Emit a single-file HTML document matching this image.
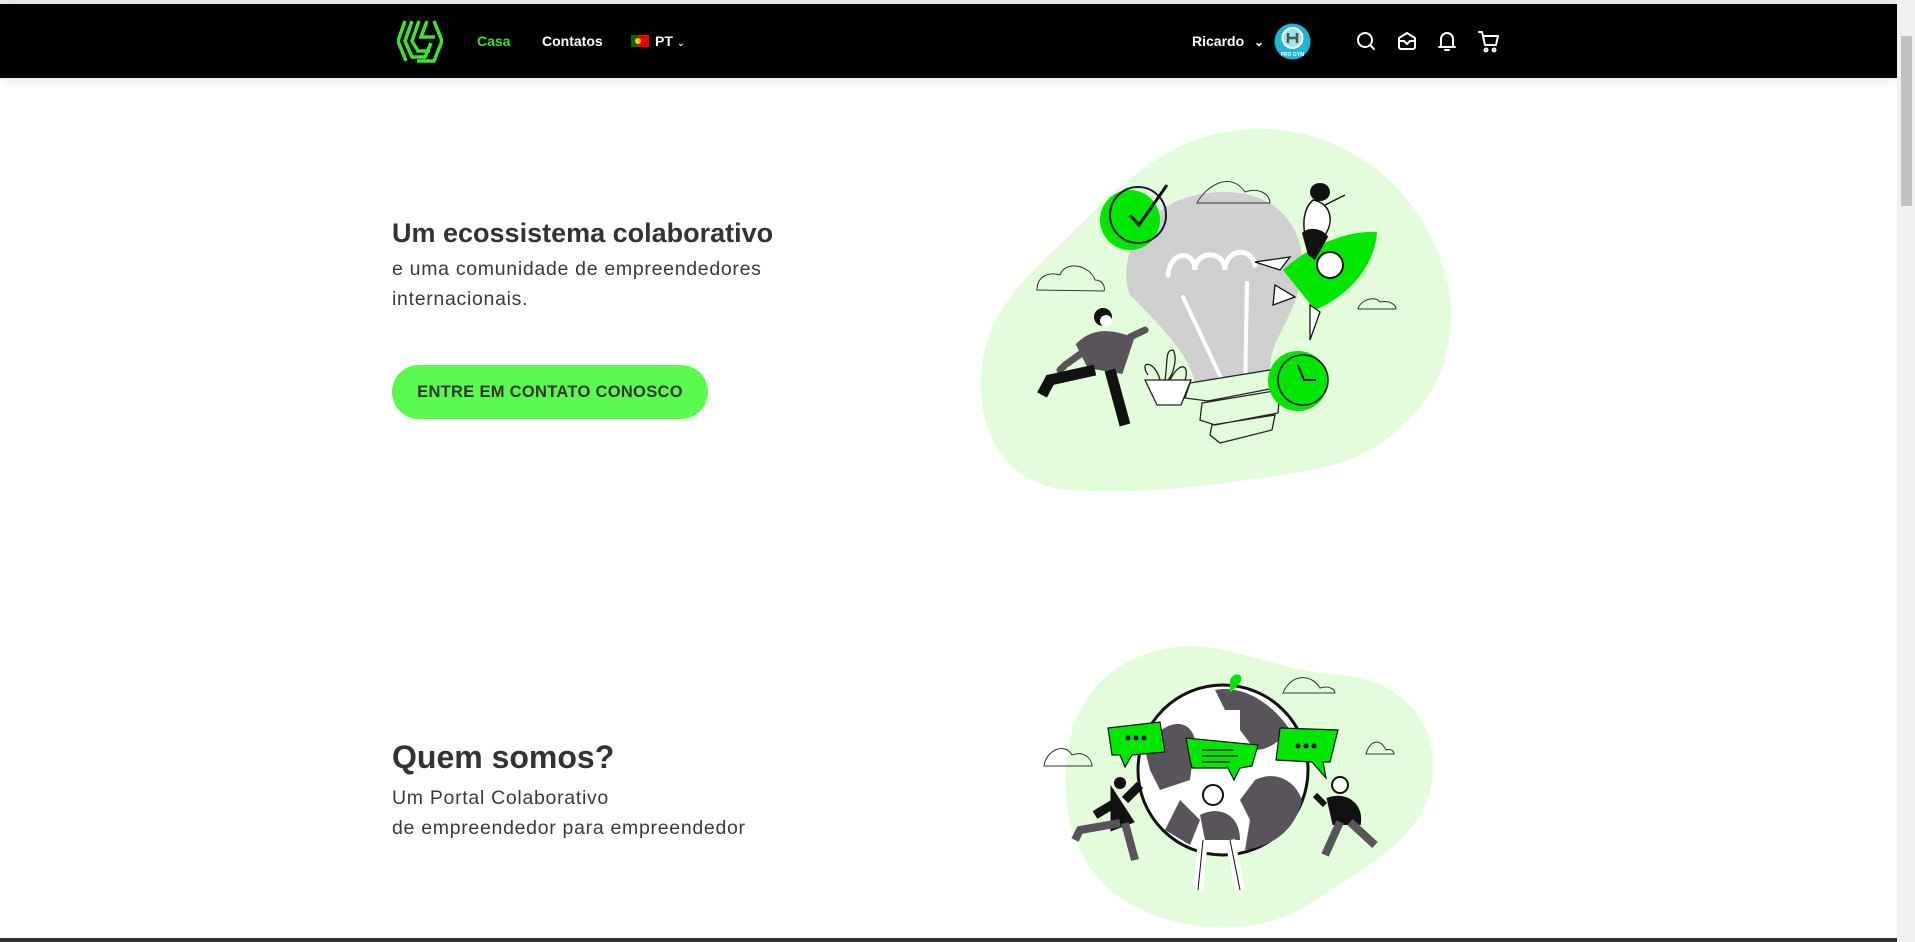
<!DOCTYPE html>
<html><head><meta charset="utf-8"><style>
*{margin:0;padding:0;box-sizing:border-box}
body{width:1915px;height:942px;overflow:hidden;background:#fff;font-family:"Liberation Sans",sans-serif;position:relative}
.top{position:absolute;left:0;top:0;width:1915px;height:4px;background:#e8e8e8}
nav{position:absolute;left:0;top:4px;width:1897px;height:74px;background:#000;box-shadow:0 4px 10px rgba(0,0,0,.08)}
.t{position:absolute;color:#fff;font-size:14px;font-weight:bold}
.sb{position:absolute;right:0;top:0;width:18px;height:942px;background:#f1f1f1}
.sb i{position:absolute;left:4px;top:36px;width:11px;height:170px;background:#c1c1c1}
h2{position:absolute;left:392px;color:#333;font-weight:bold}
p.s{position:absolute;left:392px;color:#3a3a3a;font-size:19.5px;line-height:30px;letter-spacing:.7px}
.btn{position:absolute;left:392px;top:365px;width:316px;height:54px;border-radius:27px;background:#5bfa4e;color:#333;font-weight:bold;font-size:16.5px;text-align:center;line-height:54px;letter-spacing:.3px}
.bot{position:absolute;left:0;top:938px;width:1897px;height:4px;background:#333}
</style></head><body>
<div class="top"></div>
<nav>
<svg style="position:absolute;left:397px;top:15px" width="46" height="44" viewBox="0 0 46 44"><g fill="none" stroke="#3fe32a" stroke-width="3.5"><path d="M8 2 L1 22 L9 42"/><path d="M15 2 L8 22 L15 38 L28 38 L34 24"/><path d="M22 2 L15 22 L21 32 L33 32"/><path d="M30 2 L24 18 L38 18"/><path d="M37 2 L45 22 L37 42 L20 42"/></g></svg>
<div class="t" style="left:477px;top:29px;color:#3fe32a">Casa</div>
<div class="t" style="left:542px;top:29px">Contatos</div>
<svg style="position:absolute;left:631px;top:31px" width="18" height="12"><rect width="7" height="12" fill="#006600"/><rect x="7" width="11" height="12" fill="#e00"/><circle cx="7" cy="6" r="3" fill="#fc0"/></svg>
<div class="t" style="left:655px;top:29px">PT <span style="font-size:10px;font-weight:normal">&#8964;</span></div>
<div class="t" style="left:1192px;top:29px">Ricardo <span style="font-size:12px;margin-left:6px">&#8964;</span></div>
<svg style="position:absolute;left:1274px;top:19px" width="37" height="37" viewBox="0 0 37 37"><circle cx="18.5" cy="18.5" r="18" fill="#1fb7d6"/><circle cx="18.5" cy="15" r="10" fill="#9fe3ef" stroke="#fff" stroke-width="2"/><path d="M14 10v10M23 10v10M14 15h9" stroke="#555" stroke-width="2.5"/><text x="18.5" y="33" font-size="5" fill="#fff" text-anchor="middle" font-family="Liberation Sans" font-weight="bold">PRO GYM</text></svg>
<svg style="position:absolute;left:1355px;top:26px" width="150" height="24" viewBox="0 0 150 24" fill="none" stroke="#fff" stroke-width="2" stroke-linecap="round" stroke-linejoin="round">
<circle cx="10" cy="10" r="7"/><path d="M15 15l4 4"/>
<path d="M44 8l8-5 8 5v9a2 2 0 0 1-2 2H46a2 2 0 0 1-2-2z"/><path d="M44 11h5l3 3 3-3h5"/>
<path d="M86 17V9a6 6 0 0 1 12 0v8zM84 17h16M90 20h4"/>
<path d="M124 2h3l3 13h11l2-9h-15"/><circle cx="131" cy="20" r="1.5"/><circle cx="139" cy="20" r="1.5"/>
</svg>
</nav>

<h2 style="top:218px;font-size:27px">Um ecossistema colaborativo</h2>
<p class="s" style="top:254px">e uma comunidade de empreendedores<br>internacionais.</p>
<div class="btn">ENTRE EM CONTATO CONOSCO</div>

<h2 style="top:739px;font-size:32px">Quem somos?</h2>
<p class="s" style="top:783px">Um Portal Colaborativo<br>de empreendedor para empreendedor</p>

<svg style="position:absolute;left:980px;top:125px" width="480" height="370" viewBox="0 0 480 370">
<path d="M270 4 C360 0 450 60 470 170 C480 260 420 330 330 345 C240 360 170 370 90 365 C20 360 -5 300 2 240 C10 180 50 150 90 110 C140 60 190 8 270 4Z" fill="#e3fcdc"/>
<path d="M245 67 C310 67 330 120 320 160 C310 200 290 215 290 245 L215 258 C210 230 180 200 150 170 C135 130 165 67 245 67Z" fill="#cfcfcf"/>
<path d="M188 150 C190 125 215 125 215 145 C215 125 245 125 245 145 C245 125 270 120 275 140" fill="none" stroke="#fff" stroke-width="5" stroke-linecap="round"/>
<path d="M203 172 L250 272 M267 158 L265 268" stroke="#fff" stroke-width="4" stroke-linecap="round"/>
<path d="M210 258 L290 245 L300 262 L228 276 L205 273Z M222 278 L300 265 L298 288 L235 300 L220 295Z M232 300 L295 290 L292 305 L240 318 L230 310Z" fill="#e3fcdc" stroke="#222" stroke-width="1.3"/>
<circle cx="150" cy="95" r="30" fill="#00e600"/><circle cx="158" cy="90" r="28" fill="none" stroke="#1a1a3a" stroke-width="2"/><path d="M150 90l9 10 28-40" fill="none" stroke="#111" stroke-width="3"/>
<circle cx="318" cy="256" r="30" fill="#00e600"/><circle cx="323" cy="255" r="25" fill="none" stroke="#111" stroke-width="1.5"/><path d="M318 240l6 15h12" fill="none" stroke="#111" stroke-width="2"/>
<path d="M303 145 C330 120 368 105 397 107 C395 140 370 170 335 185Z" fill="#00e600"/><path d="M275 137 L310 132 L300 145Z M295 160 L293 180 L315 172Z M330 180 L340 187 L330 215Z" fill="#fff" stroke="#111" stroke-width="1.3"/>
<circle cx="350" cy="140" r="13" fill="#fff" stroke="#111" stroke-width="2"/>
<path d="M333 75 C350 78 355 95 345 110 L325 110 C322 95 325 82 333 75Z M345 80 L365 70" fill="#fff" stroke="#111" stroke-width="1.5"/><ellipse cx="340" cy="67" rx="10" ry="9" fill="#111"/><path d="M322 108 C330 100 345 105 348 112 L335 135 L328 130Z" fill="#111"/>
<path d="M57 165 C57 150 70 147 80 150 C85 135 110 140 115 155 C125 155 125 165 124 166Z M217 78 C225 62 250 45 265 67 C280 62 290 70 290 78Z M378 184 C380 175 395 170 400 177 C410 175 416 180 416 184Z" fill="none" stroke="#333" stroke-width="1"/>
<ellipse cx="123" cy="192" rx="9" ry="9" fill="#111"/><circle cx="126" cy="196" r="6" fill="#fff"/>
<path d="M100 220 C110 210 125 205 150 215 L140 245 L110 240 Z M120 215 L85 240 L80 245 M150 212 L165 205" fill="#58545a" stroke="#58545a" stroke-width="7" stroke-linecap="round"/>
<path d="M115 245 L70 255 L62 270 M130 245 L145 300" fill="none" stroke="#111" stroke-width="11"/>
<path d="M165 255 l12 25 h24 l10-25z" fill="#fff" stroke="#222" stroke-width="1.3"/><path d="M180 255 c-5 -20 -22 -20 -12 -5 M185 255 c3-20 0-30 8-30 c5 8 0 25-5 30 M190 255 c10-20 20-15 15 0" fill="none" stroke="#222" stroke-width="1.3"/>
</svg>

<svg style="position:absolute;left:1040px;top:640px" width="410" height="298" viewBox="0 0 410 298">
<path d="M130 8 C180 -2 230 30 300 35 C360 40 400 80 392 140 C385 200 320 230 260 270 C200 300 120 290 70 250 C25 210 20 150 30 100 C40 50 80 15 130 8Z" fill="#e3fcdc"/>
<circle cx="183" cy="130" r="85" fill="#fff" stroke="#111" stroke-width="3"/>
<path d="M175 50 C200 45 230 60 250 90 C240 100 230 110 215 110 L200 90 L200 70 L185 70 Z M105 110 C120 80 150 75 155 100 L150 140 L120 150 L110 130Z M215 140 C235 130 255 140 262 160 C255 190 235 205 205 210 L210 180 L200 160Z M140 160 L160 180 L150 205 L125 190Z" fill="#58545a"/>
<path d="M68 88 L120 82 L125 112 L92 115 L85 127 L80 115 L72 115Z M146 98 L218 105 L212 126 L200 128 L194 140 L188 128 L152 128 L150 120Z M240 88 L298 90 L290 122 L283 122 L286 138 L272 122 L236 120Z" fill="#00e600" stroke="#111" stroke-width="1.2"/>
<circle cx="88" cy="98" r="2.5" fill="#111"/><circle cx="96" cy="98" r="2.5" fill="#111"/><circle cx="104" cy="98" r="2.5" fill="#111"/>
<circle cx="258" cy="106" r="2.5" fill="#111"/><circle cx="266" cy="106" r="2.5" fill="#111"/><circle cx="274" cy="106" r="2.5" fill="#111"/>
<path d="M162 110h32M162 116h36M162 122h28" stroke="#111" stroke-width="1.3"/>
<path d="M190 40 c5-10 15-5 10 3 l-10 10z" fill="#00e600"/>
<path d="M4 126 C6 110 25 102 32 115 C45 110 52 120 52 126Z M243 53 C250 35 270 32 280 48 C290 45 295 50 295 53Z M326 114 C330 100 340 98 346 110 C352 108 354 112 354 114Z" fill="none" stroke="#333" stroke-width="1"/>
<circle cx="80" cy="143" r="6" fill="#111"/><path d="M80 160 L55 175 M85 160 L100 145 M75 160 L88 180 L75 185Z" stroke="#111" stroke-width="9" fill="#111"/>
<path d="M80 183 L40 190 L35 200 M85 183 L95 220" fill="none" stroke="#58545a" stroke-width="8"/>
<circle cx="173" cy="155" r="10" fill="#fff" stroke="#111" stroke-width="2"/>
<path d="M160 175 C180 165 200 175 200 200 L165 200 Z" fill="#58545a"/><path d="M163 200 L158 250 M190 200 L200 250" stroke="#fff" stroke-width="10"/><path d="M163 200 L158 250 M190 200 L200 250" stroke="#111" stroke-width="1" fill="none"/>
<circle cx="300" cy="145" r="8" fill="#fff" stroke="#111" stroke-width="2"/><path d="M290 160 C305 155 320 165 318 182 L295 182 Z M285 165 L275 155" fill="#111" stroke="#111" stroke-width="6"/>
<path d="M300 182 L285 215 M310 182 L335 205" stroke="#58545a" stroke-width="8" fill="none"/>
</svg>

<div class="bot"></div>
<div class="sb"><i></i></div>
</body></html>
